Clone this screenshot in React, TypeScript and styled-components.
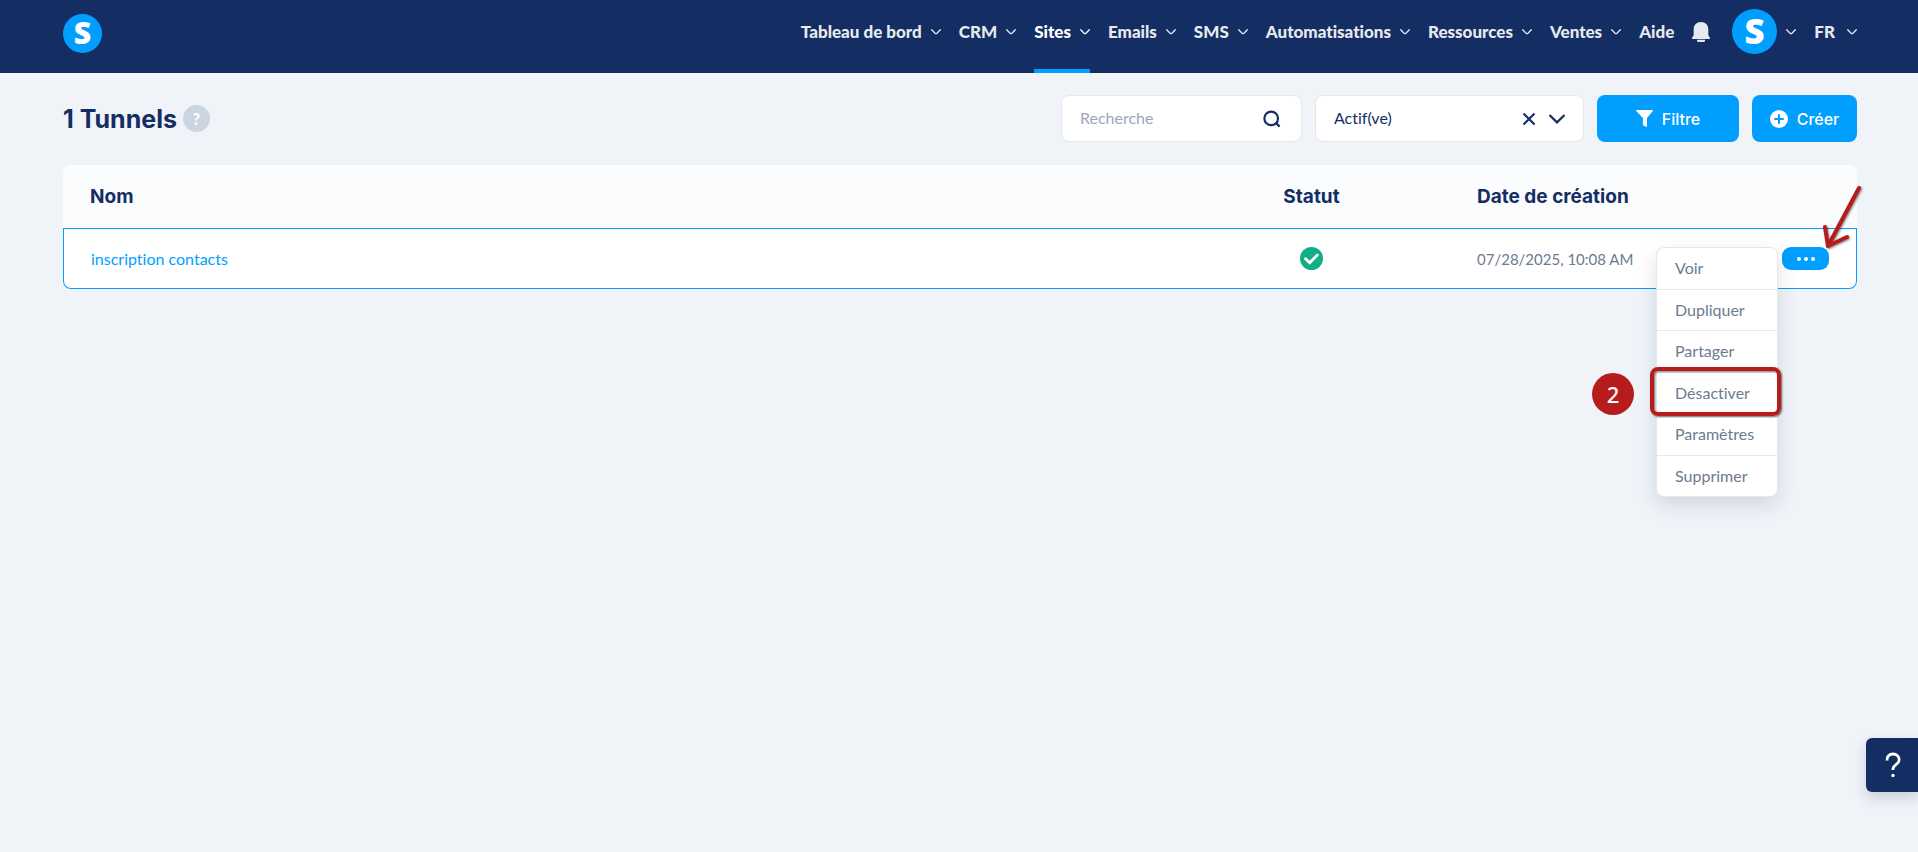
import React from 'react';
import styled, { createGlobalStyle, css } from 'styled-components';

const color = {
  navy: '#142d63',
  blue: '#009fff',
  page: '#f0f4f9',
  line: '#e4e8ed',
  muted: '#6c7b90',
  red: '#b71c1c',
};

const bodyFont = '"Lato", "Liberation Sans", sans-serif';
const headingFont = '"Inter", "Liberation Sans", sans-serif';

const GlobalStyle = createGlobalStyle`
  *, *::before, *::after { box-sizing: border-box; }
  body {
    margin: 0;
    background: ${color.page};
    color: ${color.navy};
    font-family: ${bodyFont};
    font-size: 16px;
    font-variant-ligatures: none;
    line-height: 20px;
  }
  button, input, select { font: inherit; font-variant-ligatures: none; }
  button { cursor: pointer; }
`;

const Page = styled.div`
  min-height: 100vh;
`;

const Header = styled.header`
  display: flex;
  align-items: center;
  justify-content: space-between;
  min-height: 73px;
  padding: 0 61px 0 63px;
  background: ${color.navy};
`;

const LogoLink = styled.a`
  display: flex;
  margin-bottom: 6px;
`;

const LogoMark = styled.svg`
  overflow: visible;
`;

const Nav = styled.nav`
  display: flex;
  align-self: stretch;
  gap: 18px;
  font-size: 17px;
  font-weight: 900;
`;

const NavLink = styled.a<{ $active?: boolean }>`
  display: flex;
  align-items: center;
  gap: 9px;
  padding-bottom: 9px;
  color: ${(p) => (p.$active ? '#fff' : '#e6eaee')};
  text-decoration: none;
  box-shadow: ${(p) => (p.$active ? `inset 0 -4px 0 ${color.blue}` : 'none')};
`;

const NavButton = styled.button<{ $spaced?: boolean; $gap?: string }>`
  display: flex;
  align-items: center;
  gap: ${(p) => p.$gap ?? '9px'};
  padding: 0 0 10px;
  margin-left: ${(p) => (p.$spaced ? '4px' : '0')};
  border: 0;
  background: none;
  color: #e6eaee;
`;

const Main = styled.main`
  padding: 22px 61px 60px 63px;
`;

const Toolbar = styled.div`
  display: flex;
  align-items: center;
  justify-content: space-between;
  margin-bottom: 23px;
`;

const TitleGroup = styled.div`
  display: flex;
  align-items: center;
  gap: 6px;
`;

const Title = styled.h1`
  margin: 0;
  font-family: ${headingFont};
  font-size: 25px;
  font-weight: 700;
  line-height: 32px;
`;

const HintButton = styled.button`
  display: grid;
  place-items: center;
  width: 27px;
  height: 27px;
  padding: 0;
  border: 0;
  border-radius: 50%;
  background: #cbd5e1;
  color: #fff;
  font-weight: 900;
`;

const Controls = styled.div`
  display: flex;
  gap: 13px;
`;

const fieldBox = css`
  height: 47px;
  border: 1px solid ${color.line};
  border-radius: 8px;
  background: #fff;
`;

const SearchField = styled.label`
  ${fieldBox}
  display: flex;
  align-items: center;
  width: 241px;
  padding: 0 20px 0 18px;
`;

const SearchInput = styled.input`
  flex: 1;
  min-width: 0;
  padding: 0 0 2px;
  border: 0;
  outline: 0;
  background: none;
  color: ${color.navy};
  &::placeholder { color: #9aa7b8; opacity: 1; }
`;

const SelectField = styled.div`
  position: relative;
  width: 269px;
`;

const Select = styled.select`
  ${fieldBox}
  width: 100%;
  padding: 0 60px 2px 18px;
  appearance: none;
  color: ${color.navy};
`;

const SelectIcons = styled.div`
  position: absolute;
  top: 0;
  right: 18px;
  bottom: 0;
  display: flex;
  align-items: center;
  gap: 12px;
  pointer-events: none;
`;

const ClearButton = styled.button`
  display: flex;
  padding: 0;
  border: 0;
  background: none;
  pointer-events: auto;
`;

const PrimaryButton = styled.button<{ $wide?: boolean }>`
  display: flex;
  align-items: center;
  justify-content: center;
  gap: 9px;
  width: ${(p) => (p.$wide ? '142px' : '105px')};
  height: 47px;
  padding: 0;
  border: 0;
  border-radius: 8px;
  background: ${color.blue};
  color: #fff;
  font-family: ${headingFont};
  font-weight: 500;
`;

const Table = styled.table`
  width: 100%;
  table-layout: fixed;
  border-collapse: separate;
  border-spacing: 0;
`;

const HeadCell = styled.th<{ $width?: string; $center?: boolean }>`
  width: ${(p) => p.$width ?? 'auto'};
  height: 63px;
  padding: 0 27px;
  background: #fafcfe;
  font-family: ${headingFont};
  font-size: 19px;
  font-weight: 700;
  text-align: ${(p) => (p.$center ? 'center' : 'left')};
  &:first-child { border-top-left-radius: 8px; }
  &:last-child { border-top-right-radius: 8px; }
`;

const Cell = styled.td<{ $center?: boolean; $small?: boolean }>`
  height: 61px;
  padding: 0 27px;
  border: solid ${color.blue};
  border-width: 1px 0;
  background: #fff;
  color: ${color.muted};
  font-size: ${(p) => (p.$small ? '15px' : '16px')};
  text-align: ${(p) => (p.$center ? 'center' : 'left')};
  white-space: nowrap;
  &:first-child { border-left-width: 1px; border-bottom-left-radius: 8px; }
  &:last-child { border-right-width: 1px; border-bottom-right-radius: 8px; }
  > svg { display: block; margin: 0 auto; }
`;

const RowLink = styled.a`
  color: ${color.blue};
  text-decoration: none;
`;

const ActionArea = styled.div`
  position: relative;
  width: 47px;
`;

const MoreButton = styled.button`
  display: flex;
  align-items: center;
  justify-content: center;
  gap: 3px;
  width: 47px;
  height: 23px;
  padding: 0;
  border: 0;
  border-radius: 9px;
  background: ${color.blue};
`;

const Dot = styled.span`
  width: 4px;
  height: 4px;
  border-radius: 50%;
  background: #fff;
`;

const Menu = styled.ul`
  position: absolute;
  top: 0;
  right: calc(100% + 4px);
  display: flex;
  flex-direction: column;
  width: 122px;
  height: 250px;
  margin: 0;
  padding: 0;
  border: 1px solid ${color.line};
  border-radius: 8px;
  background: #fff;
  box-shadow: 0 8px 20px rgba(20, 35, 70, 0.14);
  list-style: none;
`;

const MenuItem = styled.li`
  position: relative;
  display: flex;
  flex: 1;
  & + & { border-top: 1px solid ${color.line}; }
`;

const MenuButton = styled.button`
  flex: 1;
  padding: 0 0 0 18px;
  border: 0;
  background: none;
  color: ${color.muted};
  text-align: left;
`;

const Highlight = styled.span`
  position: absolute;
  inset: -6px -4px -3px -7px;
  z-index: 1;
  border: 4px solid ${color.red};
  border-radius: 8px;
  box-shadow: 1px 1px 2px rgba(0, 0, 0, 0.6), inset 1px 1px 2px rgba(0, 0, 0, 0.5);
  pointer-events: none;
`;

const StepBadge = styled.span`
  position: absolute;
  top: 0;
  right: calc(100% + 23px);
  display: grid;
  place-items: center;
  width: 42px;
  height: 42px;
  border-radius: 50%;
  background: ${color.red};
  color: #fff;
  font-family: "Noto Sans", sans-serif;
  font-size: 22px;
  font-weight: 500;
`;

const Arrow = styled.svg`
  position: absolute;
  right: -34px;
  bottom: calc(100% - 3px);
  filter: drop-shadow(1px 1px 1px rgba(0, 0, 0, 0.5));
  pointer-events: none;
`;

const HelpTab = styled.button`
  position: fixed;
  right: 0;
  bottom: 60px;
  display: grid;
  place-items: center;
  width: 52px;
  height: 54px;
  padding: 0 0 0 2px;
  border: 0;
  border-radius: 6px 0 0 6px;
  background: ${color.navy};
  box-shadow: 0 6px 14px rgba(20, 35, 70, 0.18);
`;

const Logo = ({ size }: { size: number }) => (
  <LogoMark width={size} height={size} viewBox="0 0 40 40" role="img" aria-label="Systeme">
    <circle cx="20" cy="20" r="20" fill={color.blue} />
    <text
      x="20"
      y="31"
      textAnchor="middle"
      fill="#fff"
      fontFamily="Open Sans, sans-serif"
      fontSize="31"
      fontWeight="800"
    >
      S
    </text>
  </LogoMark>
);

const SmallChevron = () => (
  <svg width="10" height="6" viewBox="0 0 10 6" fill="none" aria-hidden="true">
    <path
      d="M.7.8 4.3 4.4Q5 5 5.7 4.4L9.3.8"
      stroke="currentColor"
      strokeWidth="1.3"
      strokeLinecap="round"
    />
  </svg>
);

const SearchIcon = () => (
  <svg width="18" height="18" viewBox="0 0 18 18" fill="none" stroke={color.navy} strokeWidth="2.2">
    <circle cx="8.2" cy="8.4" r="6.8" />
    <path d="m12.6 12.6 4 4" />
  </svg>
);

const navItems = [
  'Tableau de bord',
  'CRM',
  'Sites',
  'Emails',
  'SMS',
  'Automatisations',
  'Ressources',
  'Ventes',
];

const menuItems = ['Voir', 'Dupliquer', 'Partager', 'Désactiver', 'Paramètres', 'Supprimer'];

export default function App() {
  return (
    <Page>
      <GlobalStyle />
      <Header>
        <LogoLink href="#">
          <Logo size={39} />
        </LogoLink>
        <Nav>
          {navItems.map((item) => (
            <NavLink key={item} href="#" $active={item === 'Sites'}>
              {item}
              <SmallChevron />
            </NavLink>
          ))}
          <NavLink href="#">Aide</NavLink>
          <NavButton aria-label="Notifications">
            <svg width="18" height="20" viewBox="0 0 18 20" fill="currentColor">
              <path d="M9 0C4.6 0 1.7 3 1.7 7v5.6C1.7 14.5 0 14.8 0 16.2c0 .6.4.8 1 .8h16c.6 0 1-.2 1-.8 0-1.4-1.7-1.7-1.7-3.6V7C16.3 3 13.4 0 9 0Z" />
              <path d="M5 17.8h8v1c0 .7-.4 1.2-1.2 1.2H6.2C5.4 20 5 19.5 5 18.8Z" />
            </svg>
          </NavButton>
          <NavButton $spaced aria-label="Compte">
            <Logo size={45} />
            <SmallChevron />
          </NavButton>
          <NavButton $gap="12px">
            FR
            <SmallChevron />
          </NavButton>
        </Nav>
      </Header>

      <Main>
        <Toolbar>
          <TitleGroup>
            <Title>1 Tunnels</Title>
            <HintButton>?</HintButton>
          </TitleGroup>
          <Controls>
            <SearchField>
              <SearchInput type="text" placeholder="Recherche" aria-label="Recherche" />
              <SearchIcon />
            </SearchField>
            <SelectField>
              <Select aria-label="Statut" defaultValue="active">
                <option value="active">Actif(ve)</option>
              </Select>
              <SelectIcons>
                <ClearButton aria-label="Effacer">
                  <svg width="14" height="14" viewBox="0 0 14 14" stroke={color.navy} strokeWidth="2.2">
                    <path d="m1.5 1.5 11 11m0-11-11 11" />
                  </svg>
                </ClearButton>
                <svg width="18" height="10" viewBox="0 0 18 10" fill="none" stroke={color.navy} strokeWidth="2.2">
                  <path d="m1.5 1 7.5 7.4L16.5 1" />
                </svg>
              </SelectIcons>
            </SelectField>
            <PrimaryButton $wide>
              <svg width="17" height="17" viewBox="0 0 17 17" fill="#fff" aria-hidden="true">
                <path d="M.6 0h15.8c.6 0 .8.7.4 1.1L11 8v8.2c0 .6-.6.9-1.1.6l-2.6-1.6c-.3-.2-.4-.4-.4-.7V8L.2 1.1C-.2.7 0 0 .6 0Z" />
              </svg>
              Filtre
            </PrimaryButton>
            <PrimaryButton>
              <svg width="18" height="18" viewBox="0 0 18 18" aria-hidden="true">
                <circle cx="9" cy="9" r="9" fill="#fff" />
                <path d="M9 5v8M5 9h8" stroke={color.blue} strokeWidth="2" strokeLinecap="round" />
              </svg>
              Créer
            </PrimaryButton>
          </Controls>
        </Toolbar>

        <Table>
          <thead>
            <tr>
              <HeadCell scope="col">Nom</HeadCell>
              <HeadCell scope="col" $width="277px" $center>
                Statut
              </HeadCell>
              <HeadCell scope="col" $width="305px">
                Date de création
              </HeadCell>
              <HeadCell scope="col" $width="102px" aria-label="Actions" />
            </tr>
          </thead>
          <tbody>
            <tr>
              <Cell>
                <RowLink href="#">inscription contacts</RowLink>
              </Cell>
              <Cell $center>
                <svg width="23" height="23" viewBox="0 0 23 23" fill="none" role="img" aria-label="Actif">
                  <circle cx="11.5" cy="11.5" r="11.5" fill="#13ae87" />
                  <path d="m5.5 11.8 4.2 4L17.3 8" stroke="#fff" strokeWidth="2.8" strokeLinecap="round" />
                </svg>
              </Cell>
              <Cell $small>07/28/2025, 10:08 AM</Cell>
              <Cell>
                <ActionArea>
                  <MoreButton aria-label="Actions" aria-expanded="true">
                    <Dot />
                    <Dot />
                    <Dot />
                  </MoreButton>
                  <Menu>
                    {menuItems.map((item) => (
                      <MenuItem key={item}>
                        <MenuButton>{item}</MenuButton>
                        {item === 'Désactiver' && (
                          <>
                            <Highlight />
                            <StepBadge>2</StepBadge>
                          </>
                        )}
                      </MenuItem>
                    ))}
                  </Menu>
                  <Arrow
                    width="44"
                    height="66"
                    viewBox="0 0 44 66"
                    fill="none"
                    stroke={color.red}
                    strokeWidth="4"
                    strokeLinecap="round"
                    strokeLinejoin="round"
                  >
                    <path d="M40 4 9 62M6 43l3 19 19-9" />
                  </Arrow>
                </ActionArea>
              </Cell>
            </tr>
          </tbody>
        </Table>
      </Main>

      <HelpTab aria-label="Aide">
        <svg width="16" height="26" viewBox="0 0 16 26" fill="none">
          <path
            d="M2 8.5C1.7 4.5 4.4 2 8 2s6.4 2.5 6.2 6c-.2 4.6-6.2 4.5-6.2 8.8V18"
            stroke="#fff"
            strokeWidth="2.8"
          />
          <circle cx="8" cy="23.5" r="1.7" fill="#fff" />
        </svg>
      </HelpTab>
    </Page>
  );
}
